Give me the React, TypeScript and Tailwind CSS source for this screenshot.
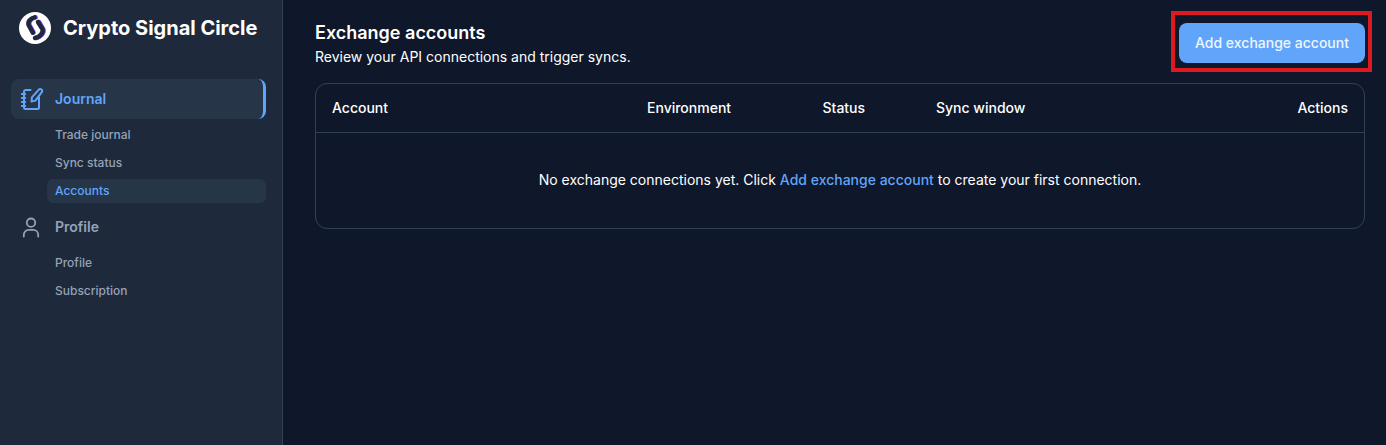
const headers = [
  { label: "Account", cls: "w-[315px]" },
  { label: "Environment", cls: "w-[175.5px]" },
  { label: "Status", cls: "w-[113.5px]" },
  { label: "Sync window", cls: "flex-1" },
];

function Logo() {
  return (
    <svg width="32" height="32" viewBox="0 0 32 32">
      <circle cx="16" cy="16" r="16" fill="#ffffff" />
      <g fill="none" strokeWidth="4.5" strokeLinecap="round" strokeLinejoin="round">
        <path d="M16.6 5.4 C12 6.5 9.4 9.5 10.4 13 L14.6 20.6" stroke="#7c3aed" />
        <path d="M20 10 L24.4 17.4 C25.4 21 21.6 25 17 26" stroke="#7c3aed" />
        <path d="M15.6 5.4 C11 6.5 8.6 9.5 9.6 13 L13.8 20.6" stroke="#1e293b" />
        <path d="M19 10 L23.6 17.4 C24.4 21 20.6 25 16 26" stroke="#1e293b" />
      </g>
    </svg>
  );
}

function JournalIcon() {
  return (
    <svg width="24" height="24" viewBox="0 0 24 24" fill="none" stroke="currentColor" strokeWidth="2" strokeLinecap="round" strokeLinejoin="round" className="ml-[9px]">
      <path d="M10.5 3H6a2 2 0 0 0-2 2v15.5A1.5 1.5 0 0 0 5.5 22h12a1.5 1.5 0 0 0 1.5-1.5V10.5" />
      <path d="M1.8 7h3.4M1.8 11h3.4M1.8 15h3.4M1.8 19h3.4" />
      <path d="M11.5 14.6l.4-4.2L18.8 2.6a2 2 0 0 1 3 2.6L15.4 13.6z" />
    </svg>
  );
}

function ProfileIcon() {
  return (
    <svg width="24" height="24" viewBox="0 0 24 24" fill="none" stroke="currentColor" strokeWidth="1.8" strokeLinecap="round" className="ml-[9px]">
      <circle cx="11" cy="7.7" r="4.2" />
      <path d="M3.8 21.6v-1.8a5 5 0 0 1 5-5h4.4a5 5 0 0 1 5 5v1.8" />
    </svg>
  );
}

export default function App() {
  return (
    <div
      className="flex h-[445px] w-full overflow-hidden bg-[#0f172a] text-white"
      style={{ fontFamily: "Inter, sans-serif" }}
    >
      <aside className="flex w-[283px] shrink-0 flex-col border-r border-[#334155] bg-[#1e293b] pl-[11px] pr-4">
        <div className="flex h-[55px] items-center gap-[12px] pl-2">
          <Logo />
          <span className="text-[20px] leading-7 font-bold">Crypto Signal Circle</span>
        </div>
        <nav className="mt-6 flex flex-col">
          <div className="flex h-10 items-center rounded-lg border-r-[3px] border-[#60a5fa] bg-[#273549] text-[#60a5fa]">
            <JournalIcon />
            <span className="ml-[11px] text-sm font-semibold">Journal</span>
          </div>
          <div className="mt-[2px] ml-9 flex flex-col text-xs font-medium text-[#94a3b8]">
            <div className="flex h-7 items-center px-2">Trade journal</div>
            <div className="flex h-7 items-center px-2">Sync status</div>
            <div className="mt-[2px] flex h-6 items-center rounded-md bg-[#273549] px-2 text-[#60a5fa]">
              Accounts
            </div>
          </div>
          <div className="mt-1 flex h-10 items-center text-[#94a3b8]">
            <ProfileIcon />
            <span className="ml-[11px] text-sm font-semibold">Profile</span>
          </div>
          <div className="mt-[2px] ml-9 flex flex-col text-xs font-medium text-[#94a3b8]">
            <div className="flex h-7 items-center px-2">Profile</div>
            <div className="flex h-7 items-center px-2">Subscription</div>
          </div>
        </nav>
      </aside>
      <main className="min-w-0 flex-1 pt-[23px] pr-[21px] pl-8">
        <div className="flex h-[60px] items-start justify-between">
          <div>
            <h1 className="text-lg leading-[20px] font-semibold">Exchange accounts</h1>
            <p className="mt-1 text-sm leading-5">Review your API connections and trigger syncs.</p>
          </div>
          <div className="relative">
            <button className="flex h-10 w-[186px] items-center justify-center rounded-lg bg-[#60a5fa] text-sm font-medium text-[#eff6ff]">
              Add exchange account
            </button>
            <div className="absolute -top-3 -right-[7px] -bottom-[9px] -left-2 border-4 border-[#dc1a1f]" />
          </div>
        </div>
        <div className="overflow-hidden rounded-xl border border-[#334155]">
          <div className="flex h-[49px] items-center border-b border-[#334155] px-4 text-sm font-medium">
            {headers.map((h) => (
              <div key={h.label} className={h.cls}>
                {h.label}
              </div>
            ))}
            <div>Actions</div>
          </div>
          <div className="flex h-[95px] items-center justify-center pb-[2px] text-sm">
            <p>
              No exchange connections yet. Click{" "}
              <span className="font-medium text-[#60a5fa]">Add exchange account</span> to create your first connection.
            </p>
          </div>
        </div>
      </main>
    </div>
  );
}
